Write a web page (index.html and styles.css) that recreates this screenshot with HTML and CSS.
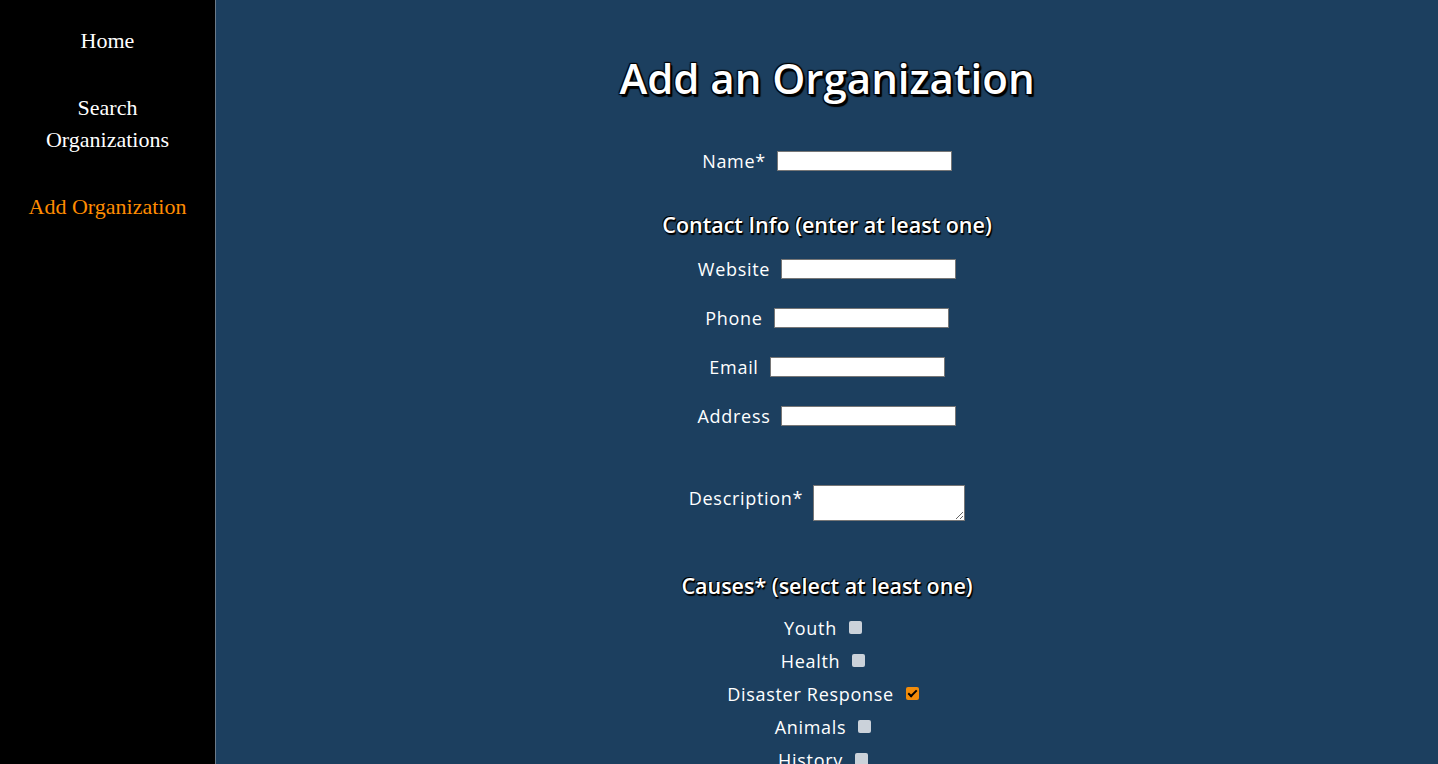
FILE: index.html
```html
<!DOCTYPE html>
<html>
<head>
<meta charset="utf-8">
<link rel="stylesheet" href="styles.css">
</head>
<body>
<nav class="sidebar">
  <a class="nav-link" href="#">Home</a>
  <a class="nav-link" href="#">Search Organizations</a>
  <a class="nav-link active" href="#">Add Organization</a>
</nav>
<main class="main">
  <h1 class="title">Add an Organization</h1>
  <div class="row row-name">
    <label class="lbl">Name*</label>
    <input class="field" type="text">
  </div>
  <h2 class="subhead subhead-contact">Contact Info (enter at least one)</h2>
  <div class="row row-contact">
    <label class="lbl">Website</label>
    <input class="field" type="text">
  </div>
  <div class="row row-contact">
    <label class="lbl">Phone</label>
    <input class="field" type="text">
  </div>
  <div class="row row-contact">
    <label class="lbl">Email</label>
    <input class="field" type="text">
  </div>
  <div class="row row-contact">
    <label class="lbl">Address</label>
    <input class="field" type="text">
  </div>
  <div class="row row-desc">
    <label class="lbl">Description*</label>
    <textarea class="area"></textarea>
  </div>
  <h2 class="subhead subhead-causes">Causes* (select at least one)</h2>
  <div class="checks">
    <label class="check-row">Youth<input class="cb" type="checkbox"></label>
    <label class="check-row">Health<input class="cb" type="checkbox"></label>
    <label class="check-row">Disaster Response<input class="cb" type="checkbox" checked></label>
    <label class="check-row">Animals<input class="cb" type="checkbox"></label>
    <label class="check-row">History<input class="cb" type="checkbox"></label>
  </div>
</main>
</body>
</html>
```

FILE: styles.css
```css
html, body {
  margin: 0;
  padding: 0;
  height: 100%;
  overflow: hidden;
}
body {
  display: flex;
  background: #1c3f5f;
  font-family: "Open Sans", "Liberation Sans", sans-serif;
}
.sidebar {
  width: 216px;
  flex: none;
  background: #000;
  border-right: 1px solid #6b7a88;
  display: flex;
  flex-direction: column;
  align-items: center;
  padding-top: 25px;
  gap: 35px;
  box-sizing: border-box;
  min-height: 100%;
}
.nav-link {
  display: block;
  flex-shrink: 0;
  width: 150px;
  text-align: center;
  font-family: "Liberation Serif", serif;
  font-size: 22px;
  line-height: 32px;
  color: #fff;
  text-decoration: none;
}
.nav-link.active {
  width: 190px;
  color: #ff8c00;
}
.main {
  flex: 1;
  display: flex;
  flex-direction: column;
  align-items: center;
  padding-top: 50px;
  color: #fff;
}
.main > * { flex-shrink: 0; }
.title {
  margin: 0;
  font-family: "Open Sans", sans-serif;
  font-weight: 600;
  font-size: 42px;
  line-height: 56px;
  color: #fff;
  text-shadow: 2px 2px 1px #000, -1px -1px 1px #000, 1px -1px 1px #000, -1px 1px 1px #000, 2px 3px 1px #000;
}
.row {
  display: flex;
  align-items: center;
  justify-content: center;
  gap: 11px;
  height: 30px;
}
.row-name { margin-top: 40px; }
.row-contact { margin-top: 19px; }
.subhead-contact + .row-contact { margin-top: 14px; }
.lbl {
  font-size: 18px;
  line-height: 26px;
  color: #fff;
  letter-spacing: 0.7px;
}
.field {
  width: 175px;
  height: 20px;
  box-sizing: border-box;
  border: 1px solid #767676;
  background: #fff;
  margin: 0;
  padding: 1px 2px;
}
.subhead {
  margin: 0;
  font-family: "Open Sans", sans-serif;
  font-weight: 600;
  font-size: 21.5px;
  line-height: 30px;
  color: #fff;
  text-shadow: 1px 1px 1px #000, -1px -1px 0 #000, 1px 2px 1px #000;
}
.subhead-contact { margin-top: 34px; }
.row-desc {
  margin-top: 54px;
  height: 36px;
  align-items: flex-start;
  gap: 10px;
}
.area {
  width: 152px;
  height: 36px;
  box-sizing: border-box;
  border: 1px solid #767676;
  background: #fff;
  margin: 0;
  padding: 2px;
  resize: both;
}
.subhead-causes { margin-top: 50px; }
.checks {
  margin-top: 10px;
  display: flex;
  flex-direction: column;
  align-items: center;
}
.check-row {
  height: 33px;
  flex-shrink: 0;
  display: flex;
  align-items: center;
  font-size: 18px;
  letter-spacing: 0.7px;
  color: #fff;
}
.cb {
  appearance: none;
  -webkit-appearance: none;
  width: 13px;
  height: 13px;
  margin: 0 8px 0 12px;
  border-radius: 2px;
  background: #cbd2da;
  position: relative;
}
.cb:checked {
  background: #f28c0a;
}
.cb:checked::after {
  content: "";
  position: absolute;
  left: 4px;
  top: 1px;
  width: 3px;
  height: 7px;
  border: solid #000;
  border-width: 0 2px 2px 0;
  transform: rotate(45deg);
}
```
